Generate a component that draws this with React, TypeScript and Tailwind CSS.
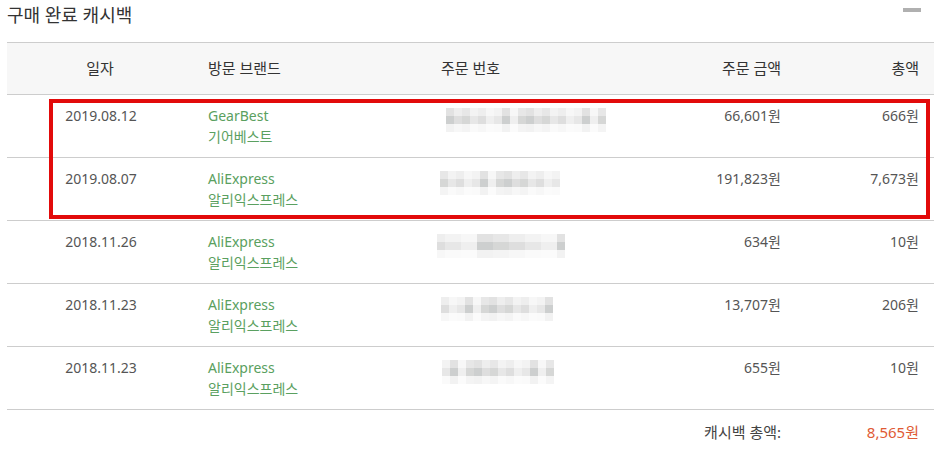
import React from "react";

const font = "font-['Noto_Sans','Noto_Sans_CJK_KR',sans-serif]";

// mosaic shades for the masked order numbers
const shades = [
  "bg-[#f5f5f5]",
  "bg-[#efefef]",
  "bg-[#e7e7e7]",
  "bg-[#dedede]",
  "bg-[#d6d7d6]",
  "bg-[#cdcfcf]",
  "bg-[#f9f9f9]",
];

const rows = [
  { date: "2019.08.12", brand: "GearBest", ko: "기어베스트", amount: "66,601원", cash: "666원", mask: [20, 6, 1] },
  { date: "2019.08.07", brand: "AliExpress", ko: "알리익스프레스", amount: "191,823원", cash: "7,673원", mask: [15, 0, 2] },
  { date: "2018.11.26", brand: "AliExpress", ko: "알리익스프레스", amount: "634원", cash: "10원", mask: [16, -3, 3] },
  { date: "2018.11.23", brand: "AliExpress", ko: "알리익스프레스", amount: "13,707원", cash: "206원", mask: [14, 1, 4] },
  { date: "2018.11.23", brand: "AliExpress", ko: "알리익스프레스", amount: "655원", cash: "10원", mask: [14, 2, 5] },
];

function Mosaic({ cols, offset, seed }: { cols: number; offset: number; seed: number }) {
  const line = (r: number, base: number) =>
    Array.from({ length: cols }).map((_, i) => {
      const v = (i * 7 + seed * 3 + r * 5 + ((i * i + seed) % 4)) % 5;
      return <div key={i} className={`h-[8px] w-[8px] ${shades[Math.min(6, v + base)]}`} />;
    });
  return (
    <div className="flex flex-col mt-[3px]" style={{ marginLeft: offset }}>
      <div className="flex opacity-70">{line(0, 0)}</div>
      <div className="flex">{line(1, 1)}</div>
      <div className="flex opacity-30">{line(2, 0)}</div>
    </div>
  );
}

export default function App() {
  return (
    <div className={`${font} relative w-[937px] h-[453px] bg-white text-[#555] overflow-hidden`}>
      <div className="flex items-start justify-between px-[7px] pt-[2px] h-[42px]">
        <h2 className="text-[18px] leading-[26px] text-[#333]">구매 완료 캐시백</h2>
        <div className="mt-[6px] mr-[9px] w-[18px] h-[4px] bg-[#b0b0b0]" />
      </div>

      <div className="mx-[7px] w-[927px] text-[14px]">
        <div className="flex h-[53px] items-center bg-[#f7f7f7] border-t border-b border-[#cdcdcd] text-[15px] text-[#333]">
          <div className="w-[186px] text-center">일자</div>
          <div className="w-[233px] pl-[15px]">방문 브랜드</div>
          <div className="w-[200px] pl-[15px]">주문 번호</div>
          <div className="w-[155px] text-right">주문 금액</div>
          <div className="flex-1 text-right pr-[15px]">총액</div>
        </div>

        {rows.map((r, i) => (
          <div key={i} className="flex h-[63px] pt-[10px] border-b border-[#cdcdcd] leading-[21px]">
            <div className="w-[186px] pl-[2px] text-center">{r.date}</div>
            <div className="w-[233px] pl-[15px] text-[#5aa060]">
              <div>{r.brand}</div>
              <div>{r.ko}</div>
            </div>
            <div className="w-[200px] pl-[14px]">
              <Mosaic cols={r.mask[0]} offset={r.mask[1]} seed={r.mask[2]} />
            </div>
            <div className="w-[155px] text-right">{r.amount}</div>
            <div className="flex-1 text-right pr-[15px]">{r.cash}</div>
          </div>
        ))}

        <div className="flex h-[44px] items-center justify-end text-[15px]">
          <span className="text-[#444]">캐시백 총액:</span>
          <span className="w-[153px] pr-[15px] text-right text-[#e05a35]">8,565원</span>
        </div>
      </div>

      {/* highlight box over the two 2019 rows */}
      <div className="absolute left-[49px] top-[99px] w-[881px] h-[120px] border-[4px] border-[#e20a0a] pointer-events-none" />
    </div>
  );
}
